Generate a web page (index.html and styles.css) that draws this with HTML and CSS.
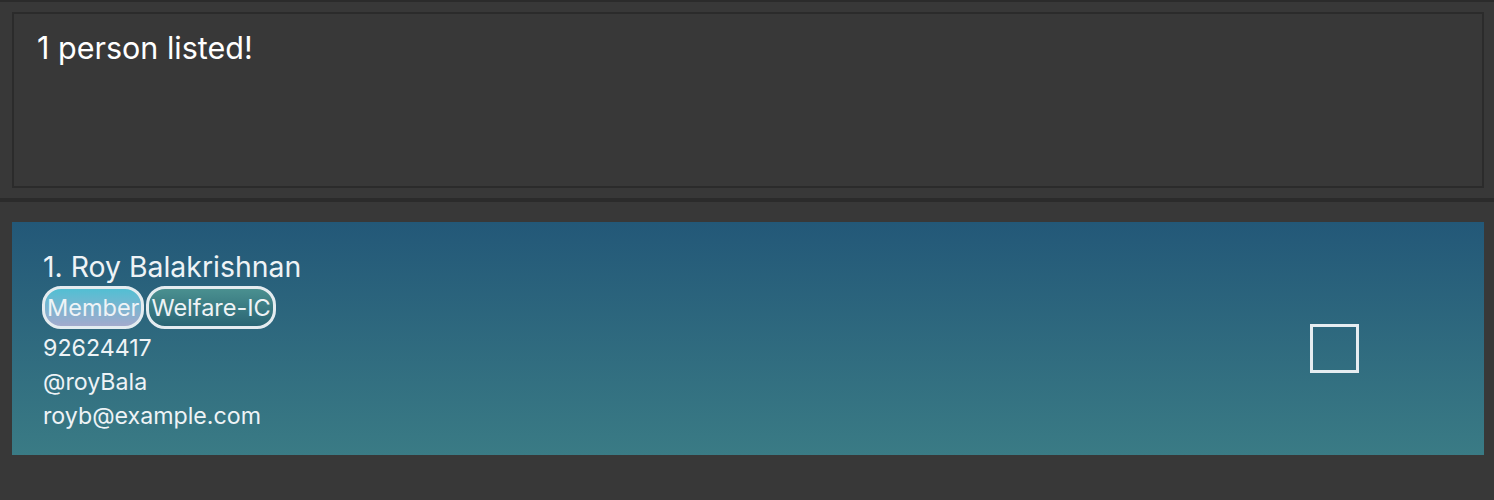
FILE: index.html
```html
<!DOCTYPE html>
<html lang="en">

<head>
    <meta charset="utf-8">
    <meta name="viewport" content="width=device-width, initial-scale=1.0">
    <title>Address Book</title>

    <!--   styles -->
    <link rel="stylesheet" href="styles.css">
</head>

<body>
    <div class="top-line"></div>

    <section class="result-pane">
        <div class="result-box">
            <p class="result-text">1 person listed!</p>
        </div>
    </section>

    <div class="divider"></div>

    <main class="list-pane">
        <article class="person-card">
            <div class="person-info">
                <h2 class="person-name">1. Roy Balakrishnan</h2>
                <div class="tags">
                    <span class="tag tag-member">Member</span>
                    <span class="tag tag-role">Welfare-IC</span>
                </div>
                <p class="person-field">92624417</p>
                <p class="person-field">@royBala</p>
                <p class="person-field">royb@example.com</p>
            </div>
            <div class="check-box"></div>
        </article>
    </main>
</body>

</html>
```

FILE: styles.css
```css
body {
    background-color: #383838;
    font-family: Inter, 'Noto Sans', sans-serif;
    color: white;
    margin: 0;
    height: 500px;
    overflow: hidden;
}

.top-line {
    height: 2px;
    background-color: #2b2b2b;
}

.result-pane {
    padding: 10px 10px 10px 12px;
}

.result-box {
    height: 172px;
    border: 2px solid #2b2b2b;
    padding: 0 23px;
}

.result-text {
    margin: 0;
    padding-top: 16px;
    font-size: 30.5px;
    line-height: 36px;
}

.divider {
    height: 4px;
    background-color: #2b2b2b;
}

.list-pane {
    padding: 20px 10px 0 12px;
}

.person-card {
    display: flex;
    justify-content: space-between;
    height: 233px;
    box-sizing: border-box;
    padding: 29px 125px 0 31px;
    background: linear-gradient(to bottom, #235878, #3a7b85);
}

.person-name {
    margin: 0;
    font-weight: normal;
    font-size: 28.4px;
    line-height: 32px;
    color: #eef3f6;
}

.tags {
    display: flex;
    gap: 2px;
    margin: 3px 0 0 -1px;
}

.tag {
    border: 3px solid #e4ecf0;
    border-radius: 19px;
    height: 37px;
    line-height: 37px;
    padding: 0 2px;
    font-size: 23.5px;
    color: #eef3f6;
}

.tag-member {
    background: linear-gradient(to bottom, #52bfd3, #a3aacd);
}

.tag-role {
    background: linear-gradient(to bottom, #4a9090, #2a6574);
}

.person-field {
    margin: 0;
    font-size: 23.2px;
    line-height: 34px;
    color: #eef3f6;
}

.person-field:first-of-type {
    margin-top: 2px;
}

.check-box {
    width: 43px;
    height: 43px;
    border: 3px solid #e6edf1;
    margin-top: 73px;
}
```
